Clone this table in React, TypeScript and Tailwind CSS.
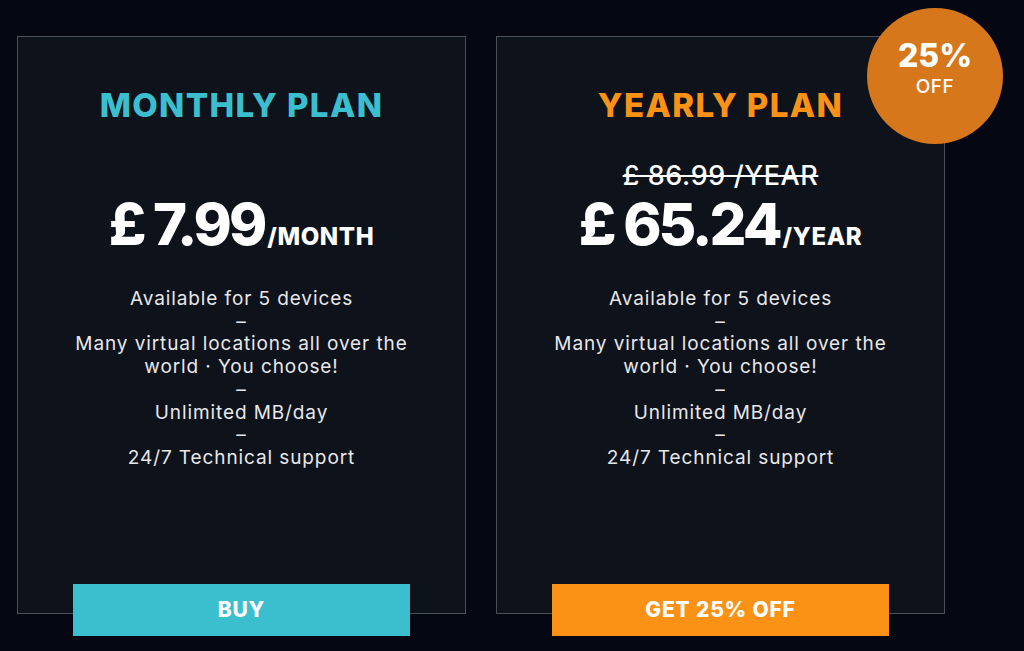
import React from "react";

type Plan = {
  title: string;
  titleClass: string;
  oldPrice?: string;
  price: string;
  unit: string;
  cta: string;
  ctaClass: string;
  badge?: boolean;
};

const FEATURES = [
  "Available for 5 devices",
  "–",
  "Many virtual locations all over the world · You choose!",
  "–",
  "Unlimited MB/day",
  "–",
  "24/7 Technical support",
];

const PLANS: Plan[] = [
  {
    title: "MONTHLY PLAN",
    titleClass: "text-[#3bbfce]",
    price: "£ 7.99",
    unit: "/MONTH",
    cta: "BUY",
    ctaClass: "bg-[#3bbfce]",
  },
  {
    title: "YEARLY PLAN",
    titleClass: "text-[#fb9216]",
    oldPrice: "£ 86.99 /YEAR",
    price: "£ 65.24",
    unit: "/YEAR",
    cta: "GET 25% OFF",
    ctaClass: "bg-[#fb9216]",
    badge: true,
  },
];

function PlanCard({ plan }: { plan: Plan }) {
  return (
    <div className="relative flex h-[578px] w-[449px] flex-col items-center border border-[#4a4f5a] bg-[#0e121b] pt-[48px] text-center">
      {plan.badge && (
        <div className="absolute -right-[59px] -top-[29px] flex h-[136px] w-[136px] flex-col items-center justify-center rounded-full bg-[#d5771a] pb-[17px] text-white">
          <span className="text-[32px] font-extrabold leading-[38px]">25%</span>
          <span className="text-[19px] font-medium leading-[24px] tracking-[0.5px]">OFF</span>
        </div>
      )}

      <h2 className={`text-[33px] font-extrabold leading-[40px] tracking-[1.4px] ${plan.titleClass}`}>
        {plan.title}
      </h2>

      <div className="mt-[32px] flex h-[34px] items-end justify-center">
        {plan.oldPrice && (
          <span className="text-[27px] font-medium leading-[30px] tracking-[0.6px] text-white line-through decoration-2">
            {plan.oldPrice}
          </span>
        )}
      </div>

      <div className="flex items-baseline justify-center text-white">
        <span className="text-[58px] font-extrabold leading-[66px] tracking-[-3px]">{plan.price}</span>
        <span className="ml-[3px] text-[24px] font-extrabold tracking-[0.6px]">{plan.unit}</span>
      </div>

      <ul className="mt-[31px] w-[370px] text-[19px] leading-[22.7px] tracking-[0.9px] text-[#e8e8ea]">
        {FEATURES.map((f, i) => (
          <li key={i}>{f}</li>
        ))}
      </ul>

      <button
        type="button"
        className={`absolute -bottom-[23px] left-[55px] h-[52px] w-[337px] text-[21px] font-extrabold tracking-[0.8px] text-white ${plan.ctaClass}`}
      >
        {plan.cta}
      </button>
    </div>
  );
}

export default function App() {
  return (
    <div className="min-h-[651px] w-full overflow-hidden bg-[#050813] font-['Inter',sans-serif]">
      <div className="flex gap-[30px] pl-[17px] pt-[36px]">
        {PLANS.map((p) => (
          <PlanCard key={p.title} plan={p} />
        ))}
      </div>
    </div>
  );
}
